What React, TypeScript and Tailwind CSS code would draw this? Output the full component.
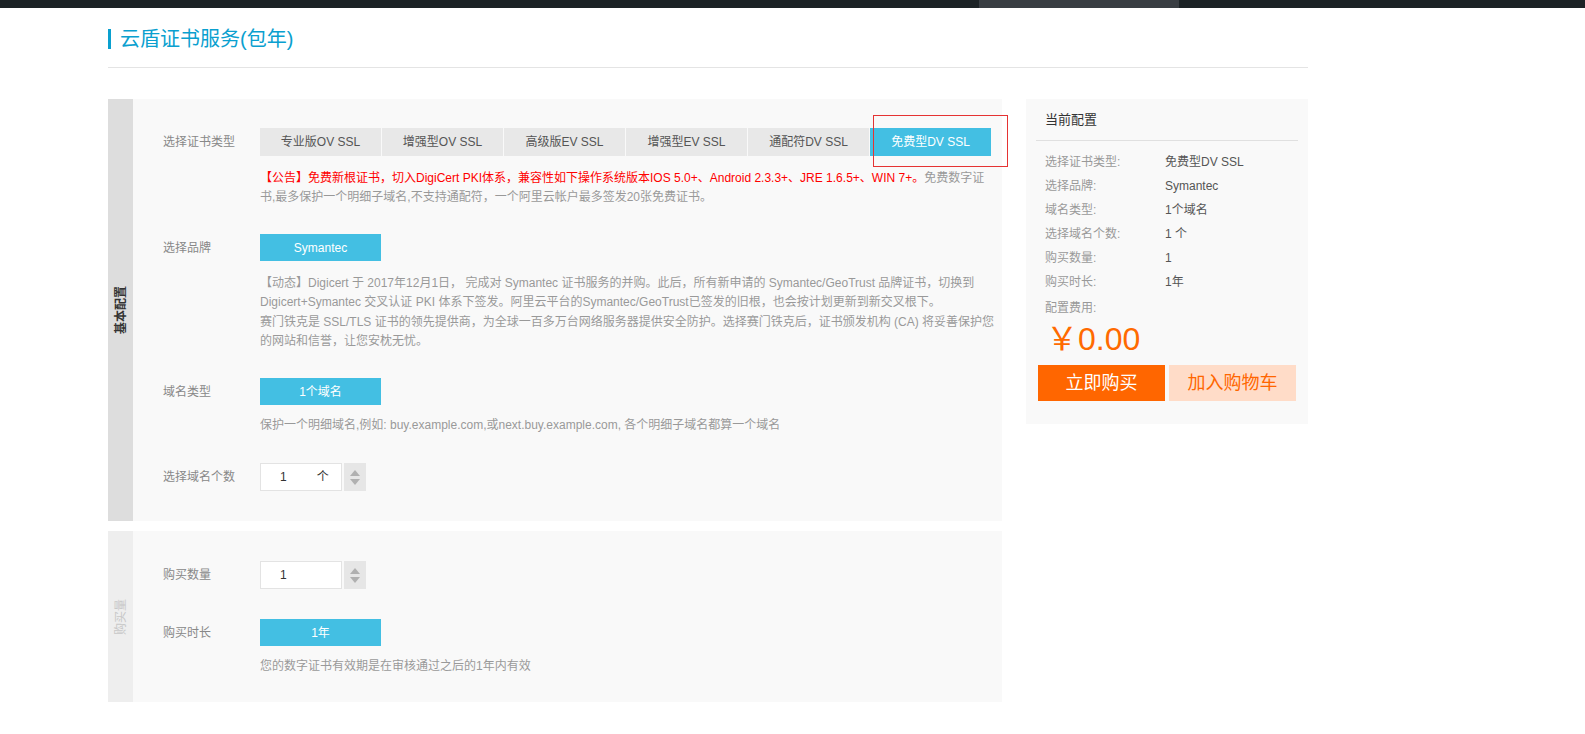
import React from "react";

const font = "font-['Liberation_Sans','Noto_Sans_CJK_SC',sans-serif]";

const certTypes = [
  "专业版OV SSL",
  "增强型OV SSL",
  "高级版EV SSL",
  "增强型EV SSL",
  "通配符DV SSL",
  "免费型DV SSL",
];

const summary = [
  ["选择证书类型:", "免费型DV SSL"],
  ["选择品牌:", "Symantec"],
  ["域名类型:", "1个域名"],
  ["选择域名个数:", "1 个"],
  ["购买数量:", "1"],
  ["购买时长:", "1年"],
];

const Spinner = () => (
  <div className="w-[22px] h-[28px] bg-[#e6e6e6] flex flex-col items-center justify-center gap-[3px]">
    <svg width="10" height="6" viewBox="0 0 10 6">
      <path d="M5 0 L10 6 L0 6 Z" fill="#b0b0b0" />
    </svg>
    <svg width="10" height="6" viewBox="0 0 10 6">
      <path d="M0 0 L10 0 L5 6 Z" fill="#b0b0b0" />
    </svg>
  </div>
);

const Label = ({ children }: { children: React.ReactNode }) => (
  <div className="w-[97px] shrink-0 text-[12px] text-[#888]">{children}</div>
);

const CyanButton = ({ children }: { children: React.ReactNode }) => (
  <div className="w-[121px] h-[27px] bg-[#43bfe3] text-white text-[12px] flex items-center justify-center">
    {children}
  </div>
);

export default function App() {
  return (
    <div className={`w-full min-h-screen bg-white ${font}`}>
      {/* top bar */}
      <div className="h-[8px] bg-[#1c2326] flex">
        <div className="ml-[979px] w-[200px] bg-[#393e43]" />
      </div>

      <div className="ml-[108px] w-[1200px]">
        {/* title */}
        <div className="flex items-center h-[60px] border-b border-[#e4e4e4] pt-[2px]">
          <div className="w-[3px] h-[20px] bg-[#0aa0cf]" />
          <h1 className="ml-[9px] text-[20px] text-[#0aa0cf] leading-none">云盾证书服务(包年)</h1>
        </div>

        <div className="flex gap-[24px] mt-[31px]">
          {/* left column */}
          <div className="w-[894px] flex flex-col gap-[10px]">
            {/* basic config */}
            <div className="relative flex bg-[#f9f9f9]">
              <div className="w-[25px] bg-[#dddddd] flex items-center justify-center">
                <span className="-rotate-90 whitespace-nowrap text-[12px] font-bold text-[#333]">基本配置</span>
              </div>
              <div className="pl-[30px] pt-[29px] pb-[30px]">
                <div className="flex items-center">
                  <Label>选择证书类型</Label>
                  <div className="flex gap-[1px]">
                    {certTypes.map((t, i) => (
                      <div
                        key={t}
                        className={
                          i === 5
                            ? "w-[121px] h-[28px] bg-[#43bfe3] text-white text-[12px] flex items-center justify-center"
                            : "w-[121px] h-[28px] bg-[#e8e8e8] text-[#555] text-[12px] flex items-center justify-center"
                        }
                      >
                        {t}
                      </div>
                    ))}
                  </div>
                </div>
                <p className="ml-[97px] mt-[13px] text-[12px] leading-[19px] text-[#999] whitespace-nowrap">
                  <span className="text-[#ff0000]">
                    【公告】免费新根证书，切入DigiCert PKI体系，兼容性如下操作系统版本IOS 5.0+、Android 2.3.3+、JRE 1.6.5+、WIN 7+。
                  </span>
                  免费数字证
                  <br />
                  书,最多保护一个明细子域名,不支持通配符，一个阿里云帐户最多签发20张免费证书。
                </p>

                <div className="flex items-center mt-[27px]">
                  <Label>选择品牌</Label>
                  <CyanButton>Symantec</CyanButton>
                </div>
                <p className="ml-[97px] mt-[13px] text-[12px] leading-[19.3px] text-[#999] whitespace-nowrap">
                  【动态】Digicert 于 2017年12月1日， 完成对 Symantec 证书服务的并购。此后，所有新申请的 Symantec/GeoTrust 品牌证书，切换到
                  <br />
                  Digicert+Symantec 交叉认证 PKI 体系下签发。阿里云平台的Symantec/GeoTrust已签发的旧根，也会按计划更新到新交叉根下。
                  <br />
                  赛门铁克是 SSL/TLS 证书的领先提供商，为全球一百多万台网络服务器提供安全防护。选择赛门铁克后，证书颁发机构 (CA) 将妥善保护您
                  <br />
                  的网站和信誉，让您安枕无忧。
                </p>

                <div className="flex items-center mt-[27px]">
                  <Label>域名类型</Label>
                  <CyanButton>1个域名</CyanButton>
                </div>
                <p className="ml-[97px] mt-[11px] text-[12px] leading-[19px] text-[#999] whitespace-nowrap">
                  保护一个明细域名,例如: buy.example.com,或next.buy.example.com, 各个明细子域名都算一个域名
                </p>

                <div className="flex items-center mt-[28px]">
                  <Label>选择域名个数</Label>
                  <div className="flex items-center gap-[2px]">
                    <div className="w-[82px] h-[28px] bg-white border border-[#e3e3e3] flex items-center text-[12px] text-[#333]">
                      <span className="ml-[19px]">1</span>
                      <span className="ml-[30px]">个</span>
                    </div>
                    <Spinner />
                  </div>
                </div>
              </div>

              {/* annotation frame */}
              <div className="absolute left-[765px] top-[16px] w-[135px] h-[52px] border border-[#e53333]" />
            </div>

            {/* purchase */}
            <div className="flex bg-[#f9f9f9]">
              <div className="w-[25px] bg-[#eeeeee] flex items-center justify-center">
                <span className="-rotate-90 whitespace-nowrap text-[12px] text-[#c8c8c8]">购买量</span>
              </div>
              <div className="pl-[30px] pt-[30px] pb-[26px]">
                <div className="flex items-center">
                  <Label>购买数量</Label>
                  <div className="flex items-center gap-[2px]">
                    <div className="w-[82px] h-[28px] bg-white border border-[#e3e3e3] flex items-center text-[12px] text-[#333]">
                      <span className="ml-[19px]">1</span>
                    </div>
                    <Spinner />
                  </div>
                </div>
                <div className="flex items-center mt-[30px]">
                  <Label>购买时长</Label>
                  <CyanButton>1年</CyanButton>
                </div>
                <p className="ml-[97px] mt-[11px] text-[12px] leading-[19px] text-[#999] whitespace-nowrap">
                  您的数字证书有效期是在审核通过之后的1年内有效
                </p>
              </div>
            </div>
          </div>

          {/* right summary */}
          <div className="w-[282px] self-start bg-[#f9f9f9] pb-[23px]">
            <div className="mx-[10px] h-[42px] border-b border-[#e0e0e0] flex items-center pl-[9px] text-[13px] text-[#333]">
              当前配置
            </div>
            <div className="pl-[19px] pt-[9px]">
              {summary.map(([k, v]) => (
                <div key={k} className="flex h-[24px] items-center text-[12px]">
                  <span className="w-[120px] text-[#999]">{k}</span>
                  <span className="text-[#555]">{v}</span>
                </div>
              ))}
              <div className="mt-[2px] h-[24px] flex items-center text-[12px] text-[#999]">配置费用:</div>
            </div>
            <div className="mt-[1px] pl-[20px] h-[36px] flex items-center text-[32px] text-[#ff6a00] leading-none">￥0.00</div>
            <div className="flex gap-[4px] pl-[12px] mt-[8px]">
              <div className="w-[127px] h-[36px] bg-[#ff6600] text-white text-[18px] flex items-center justify-center">
                立即购买
              </div>
              <div className="w-[127px] h-[36px] bg-[#ffdcc8] text-[#ff6600] text-[18px] flex items-center justify-center">
                加入购物车
              </div>
            </div>
          </div>
        </div>
      </div>
    </div>
  );
}
